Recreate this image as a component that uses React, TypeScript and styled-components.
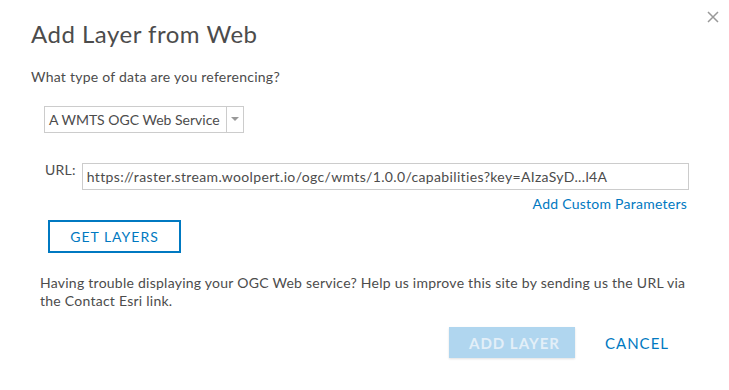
import styled, { createGlobalStyle } from "styled-components";

const GlobalStyle = createGlobalStyle`
  body {
    margin: 0;
    background: #fff;
    color: #4c4c4c;
    font-family: Lato, "Open Sans", sans-serif;
  }
`;

const Dialog = styled.div`
  width: 729px;
  height: 390px;
  box-sizing: border-box;
  padding: 0 40px 0 31px;
  display: flex;
  flex-direction: column;
  letter-spacing: 0.25px;
`;

const Header = styled.div`
  display: flex;
  justify-content: space-between;
  align-items: flex-start;
  margin-right: -30px;
`;

const Title = styled.h2`
  margin: 19px 0 0;
  font-size: 24px;
  font-weight: 400;
  line-height: 30px;
  letter-spacing: 0.5px;
  color: #4c4c4c;
`;

const CloseButton = styled.button`
  margin: 11px 0 0 0;
  width: 12px;
  height: 12px;
  padding: 0;
  border: 0;
  background: none;
  cursor: pointer;
  display: flex;
`;

const Question = styled.p`
  margin: 19px 0 0;
  font-size: 14px;
  line-height: 18px;
`;

const Indented = styled.div<{ $indent: number }>`
  margin-left: ${(p) => p.$indent}px;
`;

const Select = styled.div`
  margin-top: 20px;
  width: 200px;
  height: 27px;
  box-sizing: border-box;
  border: 1px solid #ccc;
  display: flex;
  align-items: stretch;
  font-size: 14px;
  letter-spacing: 0;
`;

const SelectValue = styled.span`
  flex: 1;
  display: flex;
  align-items: center;
  padding-left: 4px;
  white-space: nowrap;
`;

const SelectArrow = styled.span`
  width: 16px;
  border-left: 1px solid #ccc;
  display: flex;
  align-items: center;
  justify-content: center;
`;

const UrlRow = styled.div`
  margin-top: 30px;
  display: flex;
  align-items: flex-start;
  gap: 6px;
`;

const UrlLabel = styled.label`
  margin-left: 1px;
  font-size: 14px;
  line-height: 14px;
`;

const UrlInput = styled.div`
  flex: 1;
  height: 27px;
  box-sizing: border-box;
  border: 1px solid #ccc;
  padding: 0 4px;
  display: flex;
  align-items: center;
  font-size: 14px;
  letter-spacing: 0.35px;
  white-space: nowrap;
  overflow: hidden;
`;

const LinkRow = styled.div`
  display: flex;
  justify-content: flex-end;
  padding: 5px 2px 0 0;
`;

const Link = styled.a`
  color: #0079c1;
  font-size: 14px;
  line-height: 18px;
  text-decoration: none;
  cursor: pointer;
`;

const OutlineButton = styled.button`
  margin: 7px 0 0 17px;
  align-self: flex-start;
  width: 133px;
  height: 33px;
  border: 2px solid #0079c1;
  background: #fff;
  color: #0079c1;
  font-family: inherit;
  font-size: 14px;
  letter-spacing: 1px;
  cursor: pointer;
`;

const Help = styled.p`
  margin: 21px 0 0 9px;
  font-size: 14px;
  line-height: 18px;
`;

const Footer = styled.div`
  margin-top: 17px;
  display: flex;
  justify-content: flex-end;
  align-items: center;
  gap: 10px;
`;

const ActionButton = styled.button<{ $primary?: boolean }>`
  height: 31px;
  padding: 0 20px;
  border: 0;
  font-family: inherit;
  font-size: 15px;
  letter-spacing: 1px;
  white-space: nowrap;
  cursor: pointer;
  background: ${(p) => (p.$primary ? "#b0d6ef" : "transparent")};
  color: ${(p) => (p.$primary ? "#e3eff8" : "#0079c1")};
  font-weight: ${(p) => (p.$primary ? 700 : 400)};
  width: ${(p) => (p.$primary ? "126px" : "auto")};
  box-shadow: ${(p) => (p.$primary ? "0 1px 2px rgba(0,0,0,0.12)" : "none")};
`;

const App = () => (
  <Dialog>
    <GlobalStyle />
    <Header>
      <Title>Add Layer from Web</Title>
      <CloseButton aria-label="Close">
        <svg width="12" height="12" viewBox="0 0 12 12">
          <path d="M1 1L11 11M11 1L1 11" stroke="#999" strokeWidth="1.5" />
        </svg>
      </CloseButton>
    </Header>
    <Question>What type of data are you referencing?</Question>
    <Indented $indent={13}>
      <Select>
        <SelectValue>A WMTS OGC Web Service</SelectValue>
        <SelectArrow>
          <svg width="8" height="5" viewBox="0 0 8 5">
            <path d="M0 0H8L4 4Z" fill="#999" />
          </svg>
        </SelectArrow>
      </Select>
      <UrlRow>
        <UrlLabel>URL:</UrlLabel>
        <UrlInput>
          https://raster.stream.woolpert.io/ogc/wmts/1.0.0/capabilities?key=AIzaSyD...l4A
        </UrlInput>
      </UrlRow>
      <LinkRow>
        <Link>Add Custom Parameters</Link>
      </LinkRow>
    </Indented>
    <OutlineButton>GET LAYERS</OutlineButton>
    <Help>
      Having trouble displaying your OGC Web service? Help us improve this site by
      sending us the URL via the Contact Esri link.
    </Help>
    <Footer>
      <ActionButton $primary>ADD LAYER</ActionButton>
      <ActionButton>CANCEL</ActionButton>
    </Footer>
  </Dialog>
);

export default App;
